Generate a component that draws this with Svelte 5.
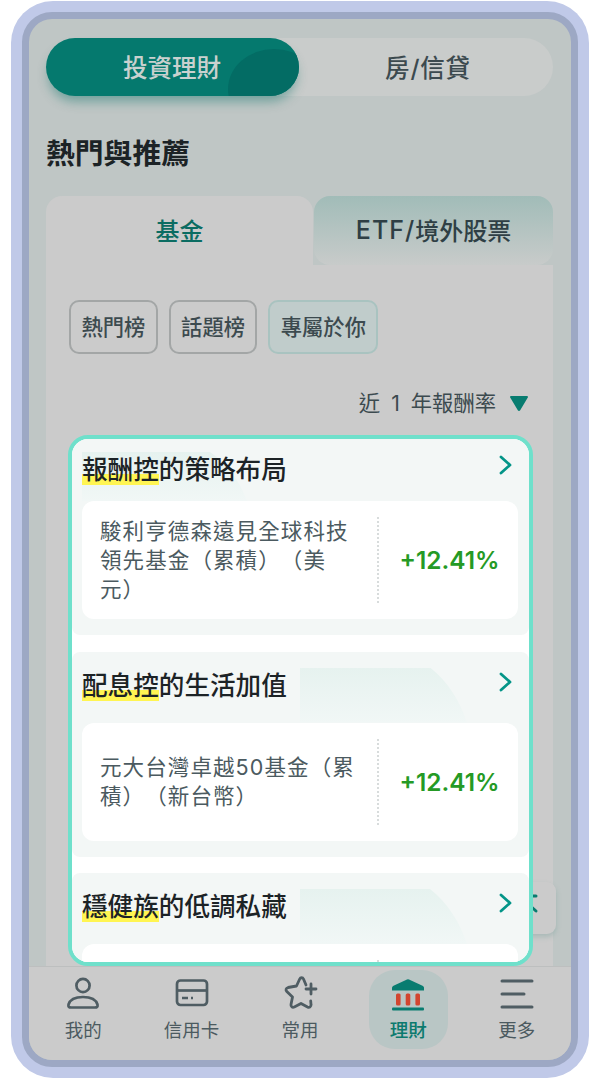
<script>
  const chips = [
    { label: '熱門榜' },
    { label: '話題榜' },
    { label: '專屬於你', on: true }
  ];
  const sections = [
    { tag: '報酬控', rest: '的策略布局', name: '駿利亨德森遠見全球科技領先基金（累積）（美元）', rate: '+12.41%', cls: 'first' },
    { tag: '配息控', rest: '的生活加值', name: '元大台灣卓越50基金（累積）（新台幣）', rate: '+12.41%', cls: '' },
    { tag: '穩健族', rest: '的低調私藏', name: '', rate: '', cls: '' }
  ];
</script>

<div class="frame">
  <div class="screen">
    <div class="main">
      <div class="segment">
        <div class="seg active"><span>投資理財</span></div>
        <div class="seg"><span class="loan">房/信貸</span></div>
      </div>

      <h1>熱門與推薦</h1>

      <div class="tabs">
        <div class="tab current">基金</div>
        <div class="tab other"><span class="latin">ETF/</span>境外股票</div>
      </div>

      <div class="panel">
        <div class="chips">
          {#each chips as c}
            <div class="chip" class:on={c.on}>{c.label}</div>
          {/each}
        </div>
        <div class="sort">
          <span>近 1 年報酬率</span>
          <svg width="20" height="17" viewBox="0 0 20 17"><path d="M2 1h16a1 1 0 0 1 .8 1.6l-7.6 12.6a1.4 1.4 0 0 1-2.4 0L1.2 2.6A1 1 0 0 1 2 1z" fill="#087c70"/></svg>
        </div>

        <div class="spot">
          {#each sections as s}
            <section class={s.cls}>
              <div class="deco"></div>
              <div class="head">
                <h2><mark>{s.tag}</mark>{s.rest}</h2>
                <svg width="15" height="22" viewBox="0 0 15 22"><path d="M3 3l9 8-9 8" fill="none" stroke="#049588" stroke-width="2.800" stroke-linecap="round" stroke-linejoin="round"/></svg>
              </div>
              <div class="fund">
                <div class="name"><p>{s.name}</p></div>
                {#if s.rate}<div class="rate">{s.rate}</div>{/if}
              </div>
            </section>
          {/each}
        </div>
      </div>

      <div class="float">
        <svg width="32" height="24" viewBox="0 0 32 24"><path d="M6 2h20M6 17l10-9 10 9" fill="none" stroke="#087c70" stroke-width="3" stroke-linecap="round" stroke-linejoin="round"/></svg>
      </div>
    </div>

    <nav>
      <div class="item">
        <svg width="36" height="36" viewBox="0 0 36 36"><g fill="none" stroke="#4f5d63" stroke-width="2.700"><circle cx="18" cy="9.500" r="6.600"/><path d="M6 31.500c-2 0-3-1-2.500-3C5 23.500 11 21 18 21s13 2.500 14.500 7.500c.5 2-.5 3-2.500 3z" stroke-linejoin="round"/></g></svg>
        <span>我的</span>
      </div>
      <div class="item">
        <svg width="36" height="36" viewBox="0 0 36 36"><g fill="none" stroke="#4f5d63" stroke-width="2.700"><rect x="3" y="4.500" width="30" height="24.500" rx="3.500"/><path d="M3 14.500h30"/></g><path d="M8 22h6M17 22h2" stroke="#4f5d63" stroke-width="2.400"/></svg>
        <span>信用卡</span>
      </div>
      <div class="item">
        <svg width="36" height="36" viewBox="0 0 36 36"><g fill="none" stroke="#4f5d63" stroke-width="2.800" stroke-linecap="round" stroke-linejoin="round"><path d="M24 9 21.500 3c-.8-1.700-3-1.700-3.800 0L14.500 10 6 11.500c-2 .4-2.600 2.600-1.200 4L10.500 21 9 28.500c-.4 2.200 1.500 3.400 3.300 2.500L19 27.500l6.500 3.500c2 1 3.800-.3 3.500-2.500l-.3-3.500"/><path d="M24 13h10M29 8v10"/></g></svg>
        <span>常用</span>
      </div>
      <div class="item sel">
        <svg width="36" height="36" viewBox="0 0 36 36"><path d="M2 12c0-1 .5-1.700 1.500-2.200L17 3.500a2.500 2.500 0 0 1 2 0l13.500 6.300c1 .5 1.500 1.200 1.500 2.200v2.500H2z" fill="#087c70"/><g fill="#d2452f"><rect x="6" y="17.500" width="4.600" height="12" rx="1.500"/><rect x="15.700" y="17.500" width="4.600" height="12" rx="1.500"/><rect x="25.400" y="17.500" width="4.600" height="12" rx="1.500"/></g><rect x="2" y="31.500" width="32" height="3" rx="1" fill="#087c70"/></svg>
        <span>理財</span>
      </div>
      <div class="item">
        <svg width="36" height="36" viewBox="0 0 36 36"><path d="M3 5h30M3 18h22M3 31h30" stroke="#4f5d63" stroke-width="3" stroke-linecap="round"/></svg>
        <span>更多</span>
      </div>
    </nav>
  </div>
</div>

<style>
  :global(body) {
    margin: 0;
    background: #fff;
    font-family: Inter, "Noto Sans CJK TC", "Noto Sans", sans-serif;
    text-spacing-trim: space-all;
  }
  .frame {
    box-sizing: border-box;
    width: 578px;
    height: 1077px;
    margin: 1px 0 0 11px;
    padding: 11px;
    background: #c0c9e8;
    border-radius: 42px;
  }
  .screen {
    box-sizing: border-box;
    height: 1055px;
    border: 7px solid #9da8c4;
    border-radius: 30px;
    overflow: hidden;
    display: flex;
    flex-direction: column;
    background: #bfc6c5;
  }
  .main {
    position: relative;
    flex: 1;
    min-height: 0;
    overflow: hidden;
    padding: 19px 18px 0 17px;
    display: flex;
    flex-direction: column;
  }
  .segment {
    display: flex;
    height: 58px;
    flex: none;
    border-radius: 29px;
    background: #c9cccb;
  }
  .seg {
    flex: 1;
    display: flex;
    align-items: center;
    justify-content: center;
    font-size: 24.500px;
    font-weight: 500;
    color: #3c4a4f;
  }
  .loan { letter-spacing: 0.800px; margin: -2px 0 0 4px; }
  .seg.active {
    flex: none;
    width: 253px;
    position: relative;
    overflow: hidden;
    border-radius: 29px;
    background: #05796e;
    color: #c9d1cf;
    box-shadow: 0 8px 12px -3px rgba(5, 110, 100, 0.45);
    padding-right: 0;
  }
  .seg.active::after {
    content: "";
    position: absolute;
    left: 182px;
    top: 11px;
    width: 92px;
    height: 80px;
    border-radius: 50%;
    background: #036c64;
  }
  .seg.active span { position: relative; z-index: 1; margin-right: 1px; margin-top: -2px; }
  h1 {
    margin: 37px 0 21px 0;
    height: 42px;
    font-size: 28.800px;
    line-height: 42px;
    font-weight: 700;
    color: #1c2326;
    flex: none;
  }
  .tabs { display: flex; flex: none; height: 69px; gap: 1px; }
  .tab {
    display: flex;
    align-items: center;
    justify-content: center;
    font-size: 24px;
    font-weight: 500;
    padding-bottom: 2px;
    box-sizing: border-box;
  }
  .current {
    width: 267px;
    background: #cbcbcb;
    color: #0b6c62;
    border-radius: 16px 16px 0 0;
  }
  .other {
    flex: 1;
    background: linear-gradient(#a1bcb8, #c8cbca);
    color: #2f3f45;
    border-radius: 16px;
  }
  .latin { font-size: 25px; letter-spacing: 1px; }
  .panel {
    flex: 1;
    background: #cbcbcb;
    padding: 35px 20px 0 22px;
    min-height: 0;
  }
  .chips { display: flex; gap: 11px; margin-left: 1px; }
  .chip {
    box-sizing: border-box;
    height: 54px;
    padding: 0 10.400px 3px;
    display: flex;
    align-items: center;
    border: 2px solid #a3a6a6;
    border-radius: 10px;
    font-size: 21.300px;
    font-weight: 500;
    color: #3c4a4f;
  }
  .chip.on { background: #c0cccb; border-color: #a9c3c0; }
  .sort {
    display: flex;
    justify-content: flex-end;
    align-items: center;
    gap: 13px;
    height: 34px;
    margin-top: 32px;
    padding-right: 4px;
    font-size: 21.300px;
    word-spacing: 5px;
    color: #3c4a4f;
  }
  .sort span { margin-top: -4px; }
  .spot {
    box-sizing: border-box;
    position: relative;
    z-index: 4;
    height: 531px;
    margin-top: 15px;
    border: 4px solid #6fe0cb;
    border-radius: 20px;
    background: #fff;
    overflow: hidden;
    display: flex;
    flex-direction: column;
    gap: 16.500px;
  }
  section {
    position: relative;
    flex: none;
    background: #f3f7f6;
    border-radius: 8px;
    padding: 16px 11px 16px 10px;
  }
  section.first { padding-top: 13px; border-radius: 0 0 8px 8px; }
  .deco {
    position: absolute;
    left: 228px;
    top: 16px;
    width: 167px;
    height: 55px;
    background: linear-gradient(#e6f2ef, #f1f7f6);
    clip-path: path("M0 0H130C148 14 160 34 167 55H0Z");
  }
  .first .deco { left: 10px; top: 13px; height: 49px; width: 165px; clip-path: path("M0 0H128C146 12 158 30 165 49H0Z"); }
  .head {
    position: relative;
    height: 32px;
    display: flex;
    justify-content: space-between;
    align-items: center;
    padding: 0 5px 0 0;
    margin-bottom: 23px;
  }
  .first .head { margin-bottom: 17px; }
  h2 {
    margin: 4px 0 0;
    font-size: 25.600px;
    line-height: 36px;
    font-weight: 500;
    color: #1c2326;
  }
  .head svg { margin-top: -4px; }
  .first .head svg { margin-top: -6px; }
  mark {
    background: linear-gradient(transparent 64%, #fff552 64%);
    color: inherit;
  }
  .fund {
    position: relative;
    box-sizing: border-box;
    height: 118px;
    background: #fff;
    border-radius: 12px;
    display: flex;
    align-items: center;
    padding: 16px 0;
  }
  .name {
    box-sizing: border-box;
    width: 297px;
    height: 86px;
    padding: 0 20px 0 18px;
    border-right: 2px dotted #d8dcdc;
    display: flex;
    align-items: center;
  }
  .name p {
    margin: 0;
    font-size: 21.500px;
    line-height: 29px;
    letter-spacing: 1.100px;
    color: #4b5a60;
  }
  .rate {
    flex: 1;
    text-align: center;
    font-weight: 600;
    font-size: 24.400px;
    color: #259a25;
    padding-left: 2px;
  }
  .float {
    position: absolute;
    z-index: 3;
    right: 15px;
    top: 863px;
    width: 60px;
    height: 52px;
    background: #cbcbcb;
    border-radius: 9px;
    box-shadow: 0 3px 5px rgba(120, 160, 155, 0.4);
    display: flex;
    justify-content: center;
    padding-top: 12px;
    box-sizing: border-box;
  }
  nav {
    flex: none;
    position: relative;
    z-index: 5;
    height: 94px;
    background: #cbcbcb;
    border-top: 1px solid #bdbfbf;
    box-sizing: border-box;
    display: grid;
    grid-template-columns: repeat(5, 108.400px);
    padding: 3px 0 0 0;
  }
  .item {
    display: flex;
    flex-direction: column;
    align-items: center;
    font-size: 18.500px;
    line-height: 26px;
    color: #4b5a60;
    height: 79px;
    box-sizing: border-box;
    padding-top: 6px;
    width: 79px;
    justify-self: center;
    border-radius: 26px;
  }
  .item span { margin-top: 5px; }
  .sel { background: #b9c6c5; color: #0b7a6e; font-weight: 500; }
</style>
